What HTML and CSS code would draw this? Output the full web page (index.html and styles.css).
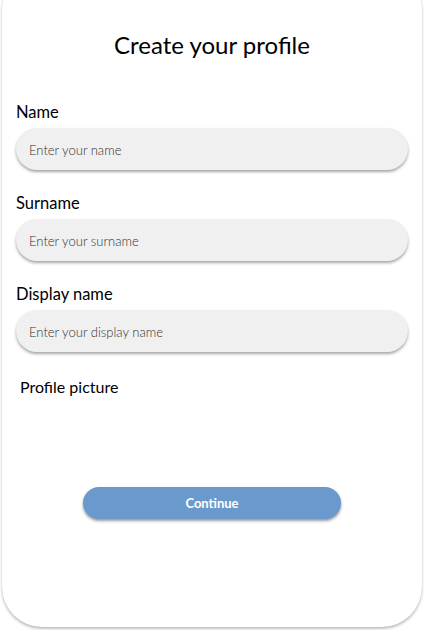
FILE: index.html
```html
<!DOCTYPE html>
<html lang="en">
<head>
<meta charset="utf-8">
<title>Create your profile</title>
<link rel="stylesheet" href="styles.css">
</head>
<body>
<main class="card">
  <h1 class="title">Create your profile</h1>
  <form class="form">
    <label class="field">
      <span class="label">Name</span>
      <input class="input" type="text" placeholder="Enter your name">
    </label>
    <label class="field">
      <span class="label">Surname</span>
      <input class="input" type="text" placeholder="Enter your surname">
    </label>
    <label class="field">
      <span class="label">Display name</span>
      <input class="input" type="text" placeholder="Enter your display name">
    </label>
    <div class="picture">
      <span class="label picture-label">Profile picture</span>
    </div>
    <div class="actions">
      <button class="continue" type="button">Continue</button>
    </div>
  </form>
</main>
</body>
</html>
```

FILE: styles.css
```css
* { box-sizing: border-box; }

html, body {
  margin: 0;
  padding: 0;
  background: #ffffff;
  overflow: hidden;
}

body {
  font-family: Lato, "Open Sans", sans-serif;
  color: #000;
  height: 630px;
}

.card {
  margin: -30px 2px 0;
  height: 657px;
  background: #fff;
  border-radius: 40px;
  box-shadow: 0 2px 3px rgba(0, 0, 0, 0.25), 0 0 1px rgba(0, 0, 0, 0.15);
  padding: 60px 14px 0;
}

.title {
  margin: 0;
  font-size: 24px;
  line-height: 30px;
  font-weight: 400;
  text-align: center;
}

.form {
  display: flex;
  flex-direction: column;
  margin-top: 42px;
}

.field {
  display: flex;
  flex-direction: column;
  gap: 6px;
  margin-bottom: 23px;
}

.label {
  font-size: 16.5px;
  line-height: 20px;
  font-weight: 400;
}

.input {
  height: 42px;
  border: none;
  border-radius: 21px;
  background: #f0f0f0;
  box-shadow: 0 2px 3px rgba(0, 0, 0, 0.35);
  padding: 2px 13px 0;
  font-family: Lato, sans-serif;
  font-size: 13px;
  font-weight: 300;
  color: #333;
  outline: none;
}

.input::placeholder {
  color: #333;
  opacity: 1;
}

.picture {
  padding-left: 4px;
  height: 110px;
  margin-top: 2px;
}

.picture-label {
  font-size: 16px;
}

.actions {
  display: flex;
  justify-content: center;
}

.continue {
  width: 258px;
  height: 32px;
  border: none;
  border-radius: 16px;
  background: #6a9acd;
  color: #fff;
  font-family: Lato, sans-serif;
  font-size: 13px;
  font-weight: 700;
  box-shadow: 0 2px 3px rgba(0, 0, 0, 0.4);
  padding: 0;
}
```
